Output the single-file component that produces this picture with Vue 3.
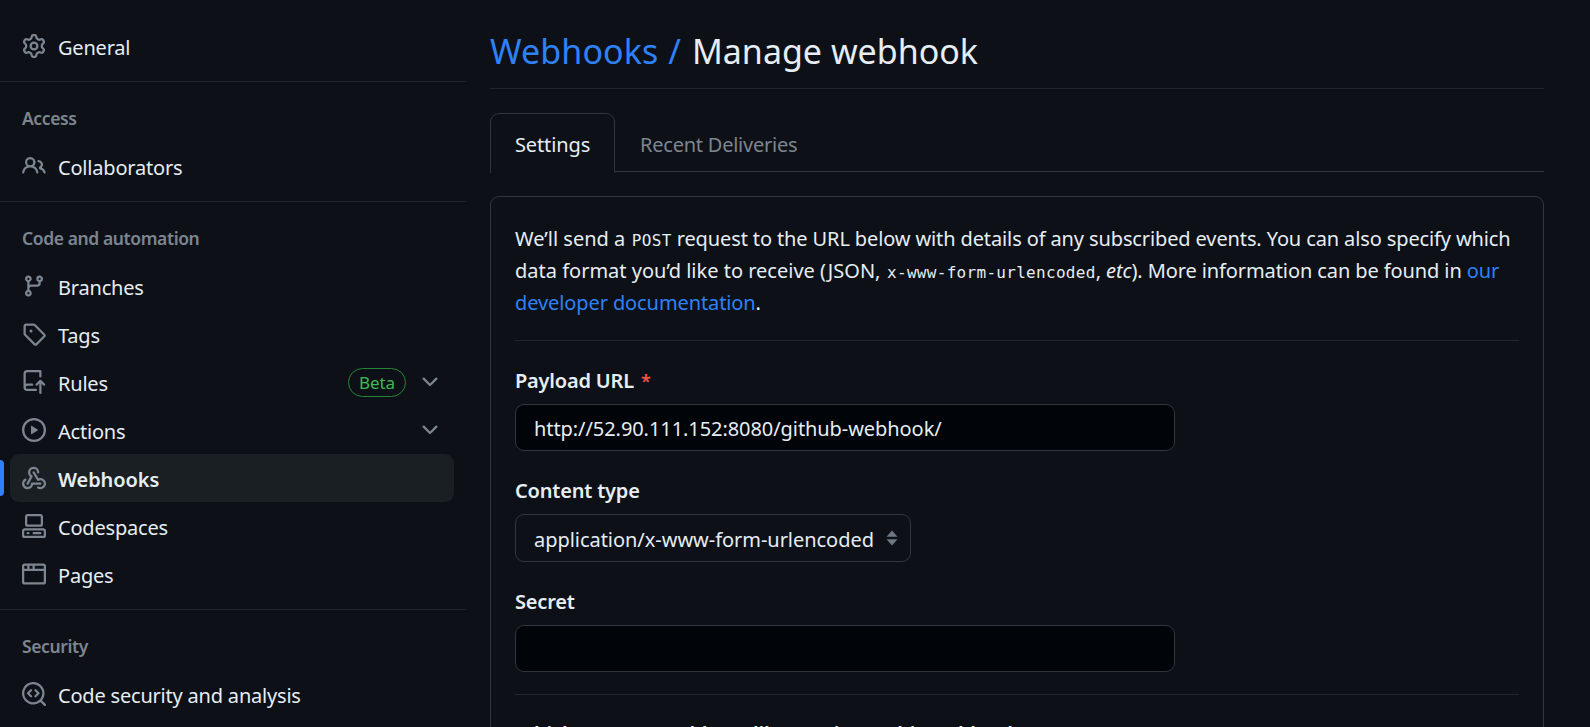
<script setup>
const icons = {
  gear: 'M8 0a8.2 8.2 0 0 1 .701.031C9.444.095 9.99.645 10.16 1.29l.288 1.107c.018.066.079.158.212.224.231.114.454.243.668.386.123.082.233.09.299.071l1.103-.303c.644-.176 1.392.021 1.82.63.27.385.506.792.704 1.218.315.675.111 1.422-.364 1.891l-.814.806c-.049.048-.098.147-.088.294.016.257.016.515 0 .772-.01.147.038.246.088.294l.814.806c.475.469.679 1.216.364 1.891a7.977 7.977 0 0 1-.704 1.217c-.428.61-1.176.807-1.82.63l-1.102-.302c-.067-.019-.177-.011-.3.071a5.909 5.909 0 0 1-.668.386c-.133.066-.194.158-.211.224l-.29 1.106c-.168.646-.715 1.196-1.458 1.26a8.006 8.006 0 0 1-1.402 0c-.743-.064-1.289-.614-1.458-1.26l-.289-1.106c-.018-.066-.079-.158-.212-.224a5.738 5.738 0 0 1-.668-.386c-.123-.082-.233-.09-.299-.071l-1.103.303c-.644.176-1.392-.021-1.82-.63a8.12 8.12 0 0 1-.704-1.218c-.315-.675-.111-1.422.363-1.891l.815-.806c.05-.048.098-.147.088-.294a6.214 6.214 0 0 1 0-.772c.01-.147-.038-.246-.088-.294l-.815-.806C.635 6.045.431 5.298.746 4.623a7.92 7.92 0 0 1 .704-1.217c.428-.61 1.176-.807 1.82-.63l1.102.302c.067.019.177.011.3-.071.214-.143.437-.272.668-.386.133-.066.194-.158.211-.224l.29-1.106C6.009.645 6.556.095 7.299.03 7.53.01 7.764 0 8 0Zm-.571 1.525c-.036.003-.108.036-.137.146l-.289 1.105c-.147.561-.549.967-.998 1.189-.173.086-.34.183-.5.29-.417.278-.97.423-1.529.27l-1.103-.303c-.109-.03-.175.016-.195.045-.22.312-.412.644-.573.99-.014.031-.021.11.059.19l.815.806c.411.406.562.957.53 1.456a4.709 4.709 0 0 0 0 .582c.032.499-.119 1.05-.53 1.456l-.815.806c-.081.08-.073.159-.059.19.162.346.353.677.573.989.02.03.085.076.195.046l1.102-.303c.56-.153 1.113-.008 1.53.27.161.107.328.204.501.29.447.222.85.629.997 1.189l.289 1.105c.029.109.101.143.137.146a6.6 6.6 0 0 0 1.142 0c.036-.003.108-.036.137-.146l.289-1.105c.147-.561.549-.967.998-1.189.173-.086.34-.183.5-.29.417-.278.97-.423 1.529-.27l1.103.303c.109.029.175-.016.195-.045.22-.313.411-.644.573-.99.014-.031.021-.11-.059-.19l-.815-.806c-.411-.406-.562-.957-.53-1.456a4.709 4.709 0 0 0 0-.582c-.032-.499.119-1.05.53-1.456l.815-.806c.081-.08.073-.159.059-.19a6.464 6.464 0 0 0-.573-.989c-.02-.03-.085-.076-.195-.046l-1.102.303c-.56.153-1.113.008-1.53-.27a4.44 4.44 0 0 0-.501-.29c-.447-.222-.85-.629-.997-1.189l-.289-1.105c-.029-.11-.101-.143-.137-.146a6.6 6.6 0 0 0-1.142 0ZM11 8a3 3 0 1 1-6 0 3 3 0 0 1 6 0ZM9.5 8a1.5 1.5 0 1 0-3.001.001A1.5 1.5 0 0 0 9.5 8Z',
  people: 'M2 5.5a3.5 3.5 0 1 1 5.898 2.549 5.508 5.508 0 0 1 3.034 4.084.75.75 0 1 1-1.482.235 4 4 0 0 0-7.9 0 .75.75 0 0 1-1.482-.236A5.507 5.507 0 0 1 3.102 8.05 3.493 3.493 0 0 1 2 5.5ZM11 4a3.001 3.001 0 0 1 2.22 5.018 5.01 5.01 0 0 1 2.56 3.012.749.749 0 0 1-.885.954.752.752 0 0 1-.549-.514 3.507 3.507 0 0 0-2.522-2.372.75.75 0 0 1-.574-.73v-.352a.75.75 0 0 1 .416-.672A1.5 1.5 0 0 0 11 5.5.75.75 0 0 1 11 4Zm-5.5-.5a2 2 0 1 0-.001 3.999A2 2 0 0 0 5.5 3.5Z',
  branch: 'M9.5 3.25a2.25 2.25 0 1 1 3 2.122V6A2.5 2.5 0 0 1 10 8.5H6a1 1 0 0 0-1 1v1.128a2.251 2.251 0 1 1-1.5 0V5.372a2.25 2.25 0 1 1 1.5 0v1.836A2.493 2.493 0 0 1 6 7h4a1 1 0 0 0 1-1v-.628A2.25 2.25 0 0 1 9.5 3.25Zm-6 0a.75.75 0 1 0 1.5 0 .75.75 0 0 0-1.5 0Zm8.25-.75a.75.75 0 1 0 0 1.5.75.75 0 0 0 0-1.5ZM4.25 12a.75.75 0 1 0 0 1.5.75.75 0 0 0 0-1.5Z',
  tag: 'M1 7.775V2.75C1 1.784 1.784 1 2.75 1h5.025c.464 0 .91.184 1.238.513l6.25 6.25a1.75 1.75 0 0 1 0 2.474l-5.026 5.026a1.75 1.75 0 0 1-2.474 0l-6.25-6.25A1.752 1.752 0 0 1 1 7.775Zm1.5 0c0 .066.026.13.073.177l6.25 6.25a.25.25 0 0 0 .354 0l5.025-5.025a.25.25 0 0 0 0-.354l-6.25-6.25a.25.25 0 0 0-.177-.073H2.75a.25.25 0 0 0-.25.25ZM6 5a1 1 0 1 1 0 2 1 1 0 0 1 0-2Z',
  rules: 'M1 2.5A2.5 2.5 0 0 1 3.5 0h8.75a.75.75 0 0 1 .75.75v3.5a.75.75 0 0 1-1.5 0V1.5h-8a1 1 0 0 0-1 1v6.708A2.493 2.493 0 0 1 3.5 9h3.25a.75.75 0 0 1 0 1.5H3.5a1 1 0 0 0 0 2h5.75a.75.75 0 0 1 0 1.5H3.5A2.5 2.5 0 0 1 1 11.5Zm13.23 7.79h-.001l-1.224-1.224v6.184a.75.75 0 0 1-1.5 0V9.066L10.28 10.29a.75.75 0 0 1-1.06-1.061l2.505-2.504a.75.75 0 0 1 1.06 0L15.29 9.23a.751.751 0 0 1-.018 1.042.751.751 0 0 1-1.042.018Z',
  play: 'M8 0a8 8 0 1 1 0 16A8 8 0 0 1 8 0ZM1.5 8a6.5 6.5 0 1 0 13 0 6.5 6.5 0 0 0-13 0Zm4.879-2.773 4.264 2.559a.25.25 0 0 1 0 .428l-4.264 2.559A.25.25 0 0 1 6 10.559V5.442a.25.25 0 0 1 .379-.215Z',
  webhook: 'M5.5 4.25a2.25 2.25 0 0 1 4.5 0 .75.75 0 0 0 1.5 0 3.75 3.75 0 1 0-6.14 2.889l-2.272 4.258a.75.75 0 0 0 1.324.706L7 7.25a.75.75 0 0 0-.309-1.015A2.25 2.25 0 0 1 5.5 4.25Z M7.364 3.607a.75.75 0 0 1 1.03.257l2.608 4.349a3.75 3.75 0 1 1-.628 6.785.75.75 0 0 1 .752-1.299 2.25 2.25 0 1 0-.033-3.88.75.75 0 0 1-1.03-.256L7.107 4.636a.75.75 0 0 1 .257-1.03Z M2.9 8.776A.75.75 0 0 1 2.625 9.8 2.25 2.25 0 1 0 6 11.75a.75.75 0 0 1 .75-.751h5.5a.75.75 0 0 1 0 1.5H7.425a3.751 3.751 0 1 1-5.55-3.998.75.75 0 0 1 1.024.274Z',
  codespaces: 'M0 11.25c0-.966.784-1.75 1.75-1.75h12.5c.966 0 1.75.784 1.75 1.75v3A1.75 1.75 0 0 1 14.25 16H1.75A1.75 1.75 0 0 1 0 14.25Zm2-9.5C2 .784 2.784 0 3.75 0h8.5C13.216 0 14 .784 14 1.75v5a1.75 1.75 0 0 1-1.75 1.75h-8.5A1.75 1.75 0 0 1 2 6.75Zm1.75-.25a.25.25 0 0 0-.25.25v5c0 .138.112.25.25.25h8.5a.25.25 0 0 0 .25-.25v-5a.25.25 0 0 0-.25-.25Zm-2 9.5a.25.25 0 0 0-.25.25v3c0 .138.112.25.25.25h12.5a.25.25 0 0 0 .25-.25v-3a.25.25 0 0 0-.25-.25ZM7 12.75a.75.75 0 0 1 .75-.75h4.5a.75.75 0 0 1 0 1.5h-4.5a.75.75 0 0 1-.75-.75Zm-4 0a.75.75 0 0 1 .75-.75h.5a.75.75 0 0 1 0 1.5h-.5a.75.75 0 0 1-.75-.75Z',
  browser: 'M0 2.75C0 1.784.784 1 1.75 1h12.5c.966 0 1.75.784 1.75 1.75v10.5A1.75 1.75 0 0 1 14.25 15H1.75A1.75 1.75 0 0 1 0 13.25ZM14.5 6h-13v7.25c0 .138.112.25.25.25h12.5a.25.25 0 0 0 .25-.25Zm-6-3.5v2h6V2.75a.25.25 0 0 0-.25-.25ZM5 2.5v2h2v-2Zm-3.25 0a.25.25 0 0 0-.25.25V4.5h2v-2Z',
  codescan: 'M8.47 4.97a.75.75 0 0 0 0 1.06L9.94 7.5 8.47 8.97a.75.75 0 1 0 1.06 1.06l2-2a.75.75 0 0 0 0-1.06l-2-2a.75.75 0 0 0-1.06 0ZM6.53 6.03a.75.75 0 0 0-1.06-1.06l-2 2a.75.75 0 0 0 0 1.06l2 2a.75.75 0 1 0 1.06-1.06L5.06 7.5l1.47-1.47Z M12.246 13.307a7.501 7.501 0 1 1 1.06-1.06l2.474 2.473a.749.749 0 1 1-1.06 1.06l-2.474-2.473ZM1.5 7.5a6.002 6.002 0 0 0 3.608 5.504 6.002 6.002 0 0 0 6.486-1.117.748.748 0 0 1 .292-.293A6 6 0 1 0 1.5 7.5Z',
  chevron: 'M12.78 5.22a.749.749 0 0 1 0 1.06l-4.25 4.25a.749.749 0 0 1-1.06 0L3.22 6.28a.749.749 0 1 1 1.06-1.06L8 8.939l3.72-3.719a.749.749 0 0 1 1.06 0Z',
}

const groups = [
  { title: '', items: [{ label: 'General', icon: 'gear' }] },
  { title: 'Access', items: [{ label: 'Collaborators', icon: 'people' }] },
  {
    title: 'Code and automation',
    items: [
      { label: 'Branches', icon: 'branch' },
      { label: 'Tags', icon: 'tag' },
      { label: 'Rules', icon: 'rules', badge: 'Beta', expandable: true },
      { label: 'Actions', icon: 'play', expandable: true },
      { label: 'Webhooks', icon: 'webhook', active: true },
      { label: 'Codespaces', icon: 'codespaces' },
      { label: 'Pages', icon: 'browser' },
    ],
  },
  { title: 'Security', items: [{ label: 'Code security and analysis', icon: 'codescan' }] },
]
</script>

<template>
  <div class="page">
    <nav class="sidebar">
      <section v-for="g in groups" :key="g.title" class="group">
        <h3 v-if="g.title" class="group-title">{{ g.title }}</h3>
        <a v-for="i in g.items" :key="i.label" class="item" :class="{ active: i.active }">
          <svg class="icon" viewBox="0 0 16 16"><path :d="icons[i.icon]" /></svg>
          <span class="label">{{ i.label }}</span>
          <span v-if="i.badge" class="badge">{{ i.badge }}</span>
          <svg v-if="i.expandable" class="icon chevron" viewBox="0 0 16 16"><path :d="icons.chevron" /></svg>
        </a>
      </section>
    </nav>

    <main class="main">
      <h1 class="title"><a class="link">Webhooks /</a> <span class="current">Manage webhook</span></h1>

      <div class="tabs">
        <a class="tab selected">Settings</a>
        <a class="tab">Recent Deliveries</a>
      </div>

      <div class="box">
        <p class="intro">
          <span class="lead">We’ll send a</span> <code>POST</code> <span class="rest">request to the URL below with details of any subscribed events. You can also specify which</span><br />
          <span class="lead">data format you’d like to receive (JSON,</span> <code>x-www-form-urlencoded</code>, <em>etc</em>). More information can be found in <a class="link">our<br />developer documentation</a>.
        </p>

        <label class="field-label">Payload URL <span class="required">*</span></label>
        <div class="input">http://52.90.111.152:8080/github-webhook/</div>

        <label class="field-label">Content type</label>
        <div class="input select">
          <span>application/x-www-form-urlencoded</span>
          <svg class="arrows" viewBox="0 0 12 16"><path d="M6 0.5 11.5 6.8H0.5ZM6 15.5 0.5 9.3h11Z" /></svg>
        </div>

        <label class="field-label">Secret</label>
        <div class="input"></div>

        <div class="events">Which events would you like to trigger this webhook?</div>
      </div>
    </main>
  </div>
</template>

<style>
body {
  background: #0d1117;
  overflow: hidden;
}
</style>

<style scoped>
.page {
  display: flex;
  width: 1590px;
  height: 727px;
  overflow: hidden;
  background: #0d1117;
  color: #e6edf3;
  font: 400 20px/31.5px 'Noto Sans', 'Open Sans', sans-serif;
  letter-spacing: -0.1px;
}
.page * {
  box-sizing: border-box;
}
.sidebar {
  width: 466px;
  flex: none;
  padding-top: 22px;
}
.group {
  padding-bottom: 11px;
}
.group-title {
  margin: 0;
  height: 61px;
  padding: 12px 0 0 22px;
  border-top: 1px solid #21262d;
  color: #7d8590;
  font-size: 17.5px;
  font-weight: 600;
  line-height: 48px;
  letter-spacing: -0.4px;
}
.item {
  position: relative;
  display: flex;
  align-items: center;
  height: 48px;
  margin: 0 12px 0 10px;
  padding: 0 12px;
  border-radius: 9px;
}
.icon {
  width: 24px;
  height: 24px;
  flex: none;
  fill: #7d8590;
}
.label {
  flex: 1;
  margin-left: 12px;
  padding-top: 4px;
  letter-spacing: -0.2px;
}
.active {
  background: #1a1f23;
}
.active .label {
  font-weight: 600;
  letter-spacing: -0.1px;
}
.active::before {
  content: '';
  position: absolute;
  left: -16px;
  top: 6px;
  width: 10px;
  height: 36px;
  border-radius: 4px;
  background: #2f81f7;
}
.badge {
  height: 29px;
  width: 58px;
  margin-right: 12px;
  border: 1px solid #238636;
  border-radius: 15px;
  color: #3fb950;
  font-size: 17px;
  line-height: 28px;
  text-align: center;
}
.main {
  width: 1054px;
  margin-left: 24px;
}
.title {
  margin: 0 0 24px;
  padding-top: 26px;
  height: 89px;
  border-bottom: 1px solid #21262d;
  font-size: 34px;
  font-weight: 400;
  line-height: 50px;
  letter-spacing: 0;
}
.title .link {
  letter-spacing: 0.1px;
  word-spacing: 1px;
}
.title .current {
  margin-left: 2px;
}
.link {
  color: #2f81f7;
}
.tabs {
  display: flex;
  height: 59px;
  border-bottom: 1px solid #30363d;
}
.tab {
  height: 60px;
  padding: 1px 24px 0;
  border: 1px solid transparent;
  border-bottom: 0;
  color: #7d8590;
  line-height: 60px;
  letter-spacing: -0.23px;
}
.selected {
  width: 125px;
  border-color: #30363d;
  border-radius: 9px 9px 0 0;
  background: #0d1117;
  color: #e6edf3;
  letter-spacing: -0.12px;
}
.box {
  height: 620px;
  margin-top: 24px;
  padding: 25px 24px 0;
  border: 1px solid #30363d;
  border-radius: 9px;
}
.intro {
  height: 119px;
  margin: 0;
  padding-top: 1px;
  border-bottom: 1px solid #21262d;
  line-height: 31.9px;
  white-space: nowrap;
}
.lead {
  margin-right: 1.5px;
  letter-spacing: 0;
}
.rest {
  letter-spacing: -0.12px;
}
code {
  font: 16px/1 'DejaVu Sans Mono', monospace;
  letter-spacing: 0.3px;
}
.field-label {
  display: block;
  height: 63px;
  padding-top: 24px;
  font-weight: 600;
  letter-spacing: -0.2px;
}
.required {
  margin-left: 2px;
  color: #f85149;
  font-size: 18px;
}
.input {
  width: 660px;
  height: 47px;
  padding: 1px 0 0 18px;
  border: 1px solid #30363d;
  border-radius: 9px;
  background: #010409;
  line-height: 45px;
  letter-spacing: -0.07px;
}
.select {
  display: flex;
  justify-content: space-between;
  width: 396px;
  height: 48px;
  padding: 2px 12px 0 18px;
  background: #0d1117;
  letter-spacing: -0.04px;
}
.arrows {
  width: 12px;
  height: 16px;
  margin-top: 13px;
  fill: #6e7681;
}
.events {
  margin-top: 22px;
  padding-top: 23px;
  border-top: 1px solid #21262d;
  font-weight: 600;
  letter-spacing: -0.16px;
}
</style>
